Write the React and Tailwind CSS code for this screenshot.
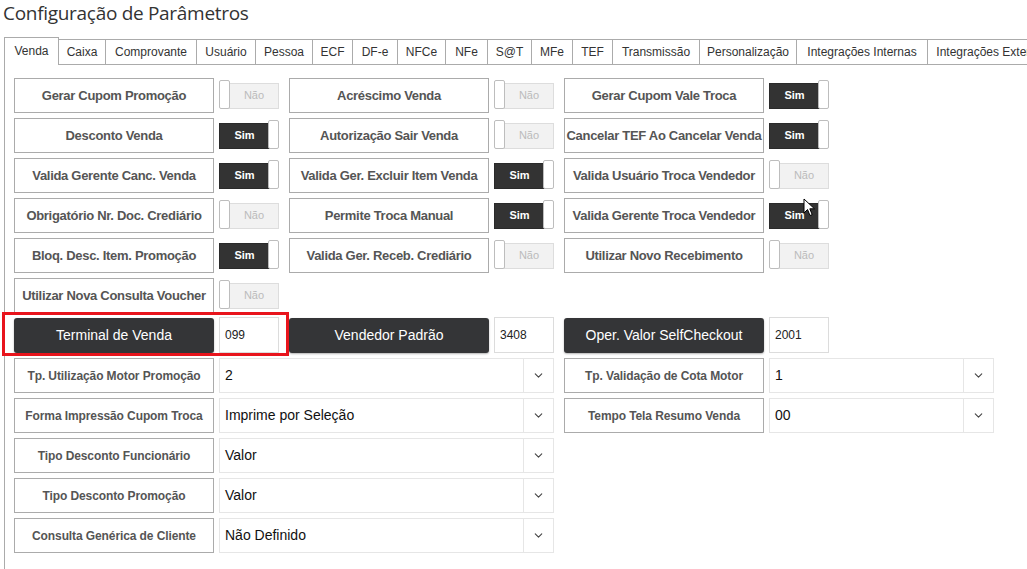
import { ChevronDown } from 'lucide-react';

const tabs = [
  { label: 'Venda', w: 'w-[55px]' },
  { label: 'Caixa', w: 'w-[47px]' },
  { label: 'Comprovante', w: 'w-[91px]' },
  { label: 'Usuário', w: 'w-[59px]' },
  { label: 'Pessoa', w: 'w-[57px]' },
  { label: 'ECF', w: 'w-[40px]' },
  { label: 'DF-e', w: 'w-[45px]' },
  { label: 'NFCe', w: 'w-[48px]' },
  { label: 'NFe', w: 'w-[42px]' },
  { label: 'S@T', w: 'w-[44px]' },
  { label: 'MFe', w: 'w-[41px]' },
  { label: 'TEF', w: 'w-[40px]' },
  { label: 'Transmissão', w: 'w-[87px]' },
  { label: 'Personalização', w: 'w-[97px]' },
  { label: 'Integrações Internas', w: 'w-[131px]' },
  { label: 'Integrações Externas', w: 'w-[131px]' }
];

const toggleRows = [
  [['Gerar Cupom Promoção', false], ['Acréscimo Venda', false], ['Gerar Cupom Vale Troca', true]],
  [['Desconto Venda', true], ['Autorização Sair Venda', false], ['Cancelar TEF Ao Cancelar Venda', true]],
  [['Valida Gerente Canc. Venda', true], ['Valida Ger. Excluir Item Venda', true], ['Valida Usuário Troca Vendedor', false]],
  [['Obrigatório Nr. Doc. Crediário', false], ['Permite Troca Manual', true], ['Valida Gerente Troca Vendedor', true]],
  [['Bloq. Desc. Item. Promoção', true], ['Valida Ger. Receb. Crediário', false], ['Utilizar Novo Recebimento', false]],
  [['Utilizar Nova Consulta Voucher', false]]
];

function Label({ children, small }) {
  return (
    <div
      className={`flex h-[35px] w-[200px] shrink-0 items-center justify-center whitespace-nowrap border border-[#ababab] bg-white text-center font-bold text-[#555] ${
        small ? 'text-[12px] tracking-[-0.1px]' : 'text-[13px] tracking-[-0.3px]'
      }`}
    >
      {children}
    </div>
  );
}

function Toggle({ on }) {
  return (
    <div className="relative flex h-[35px] w-[60px] shrink-0 items-center">
      {on ? (
        <div className="flex h-[26px] w-[51px] items-center justify-center border border-[#2a2a2a] bg-[#333] text-[11px] font-bold text-white">
          Sim
        </div>
      ) : (
        <div className="ml-[10px] flex h-[26px] w-[50px] items-center justify-center border border-[#ddd] bg-[#f2f2f2] text-[11px] text-[#bbb]">
          Não
        </div>
      )}
      <div
        className={`absolute top-[2px] h-[29px] w-[11px] rounded-[2px] border border-[#bdbdbd] bg-white ${on ? 'right-0' : 'left-0'}`}
      />
    </div>
  );
}

function DarkButton({ children }) {
  return (
    <div className="flex h-[35px] w-[200px] shrink-0 items-center justify-center rounded-[3px] bg-[#343537] text-[14px] text-white shadow-[0_1px_2px_rgba(0,0,0,0.3)]">
      {children}
    </div>
  );
}

function NumInput({ value }) {
  return (
    <div className="-mt-px flex h-[36px] w-[60px] shrink-0 items-center border border-[#dcdcdc] bg-white pl-[5px] text-[12px] text-[#222]">
      {value}
    </div>
  );
}

function Select({ value, w }) {
  return (
    <div className={`flex h-[35px] shrink-0 items-stretch border border-[#e6e6e6] bg-white ${w}`}>
      <div className="flex flex-1 items-center pl-[5px] text-[14px] text-[#111]">{value}</div>
      <div className="flex w-[30px] items-center justify-center border-l border-[#e6e6e6] text-[#444]">
        <ChevronDown size={13} strokeWidth={2} />
      </div>
    </div>
  );
}

const selectRows = [
  ['Tp. Utilização Motor Promoção', '2', 'Tp. Validação de Cota Motor', '1'],
  ['Forma Impressão Cupom Troca', 'Imprime por Seleção', 'Tempo Tela Resumo Venda', '00'],
  ['Tipo Desconto Funcionário', 'Valor'],
  ['Tipo Desconto Promoção', 'Valor'],
  ['Consulta Genérica de Cliente', 'Não Definido']
];

export default function App() {
  return (
    <div className="relative h-[569px] w-[1027px] overflow-hidden bg-white font-['Liberation_Sans',Arial,sans-serif] text-[#333]">
      <h1 className="pl-[3px] pt-[1px] font-['Open_Sans',sans-serif] text-[19px] leading-[24px] tracking-[-0.3px] text-[#333]">
        Configuração de Parâmetros
      </h1>

      <div className="ml-[4px] mt-[12px] flex items-end border-b border-[#ababab]">
        {tabs.map((t, i) =>
          i === 0 ? (
            <div
              key={t.label}
              className={`-mb-px flex h-[28px] shrink-0 items-center justify-center border-x border-t border-[#ababab] bg-white pb-[2px] text-[12px] text-[#333] ${t.w}`}
            >
              {t.label}
            </div>
          ) : (
            <div
              key={t.label}
              className={`flex h-[25px] shrink-0 items-center justify-center whitespace-nowrap border-r border-t border-[#ababab] bg-white text-[12px] text-[#333] ${t.w}`}
            >
              {t.label}
            </div>
          )
        )}
      </div>

      <div className="ml-[4px] h-[520px] border-l border-[#ababab] pl-[9px] pt-[13px]">
        <div className="flex flex-col gap-[5px]">
          {toggleRows.map((row, r) => (
            <div key={r} className="flex gap-[10px]">
              {row.map(([label, on]) => (
                <div key={label} className="flex gap-[5px]">
                  <Label>{label}</Label>
                  <Toggle on={on} />
                </div>
              ))}
            </div>
          ))}

          <div className="flex h-[35px] gap-[10px]">
            <div className="relative flex gap-[5px]">
              <div className="pointer-events-none absolute -left-[12px] -top-[6px] h-[44px] w-[287px] border-[3px] border-[#e8141c]" />
              <DarkButton>Terminal de Venda</DarkButton>
              <NumInput value="099" />
            </div>
            <div className="flex gap-[5px]">
              <DarkButton>Vendedor Padrão</DarkButton>
              <NumInput value="3408" />
            </div>
            <div className="flex gap-[5px]">
              <DarkButton>Oper. Valor SelfCheckout</DarkButton>
              <NumInput value="2001" />
            </div>
          </div>

          {selectRows.map(([l1, v1, l2, v2]) => (
            <div key={l1} className="flex gap-[10px]">
              <div className="flex gap-[5px]">
                <Label small>{l1}</Label>
                <Select value={v1} w="w-[335px]" />
              </div>
              {l2 && (
                <div className="flex gap-[5px]">
                  <Label small>{l2}</Label>
                  <Select value={v2} w="w-[225px]" />
                </div>
              )}
            </div>
          ))}
        </div>
      </div>

      <svg className="absolute left-[803px] top-[198px]" width="14" height="20" viewBox="0 0 14 20">
        <path d="M1 1 L1 15 L4.5 11.5 L7 17.5 L9.2 16.6 L6.8 10.8 L11.5 10.8 Z" fill="#fff" stroke="#000" strokeWidth="1" strokeLinejoin="round" />
      </svg>
    </div>
  );
}
